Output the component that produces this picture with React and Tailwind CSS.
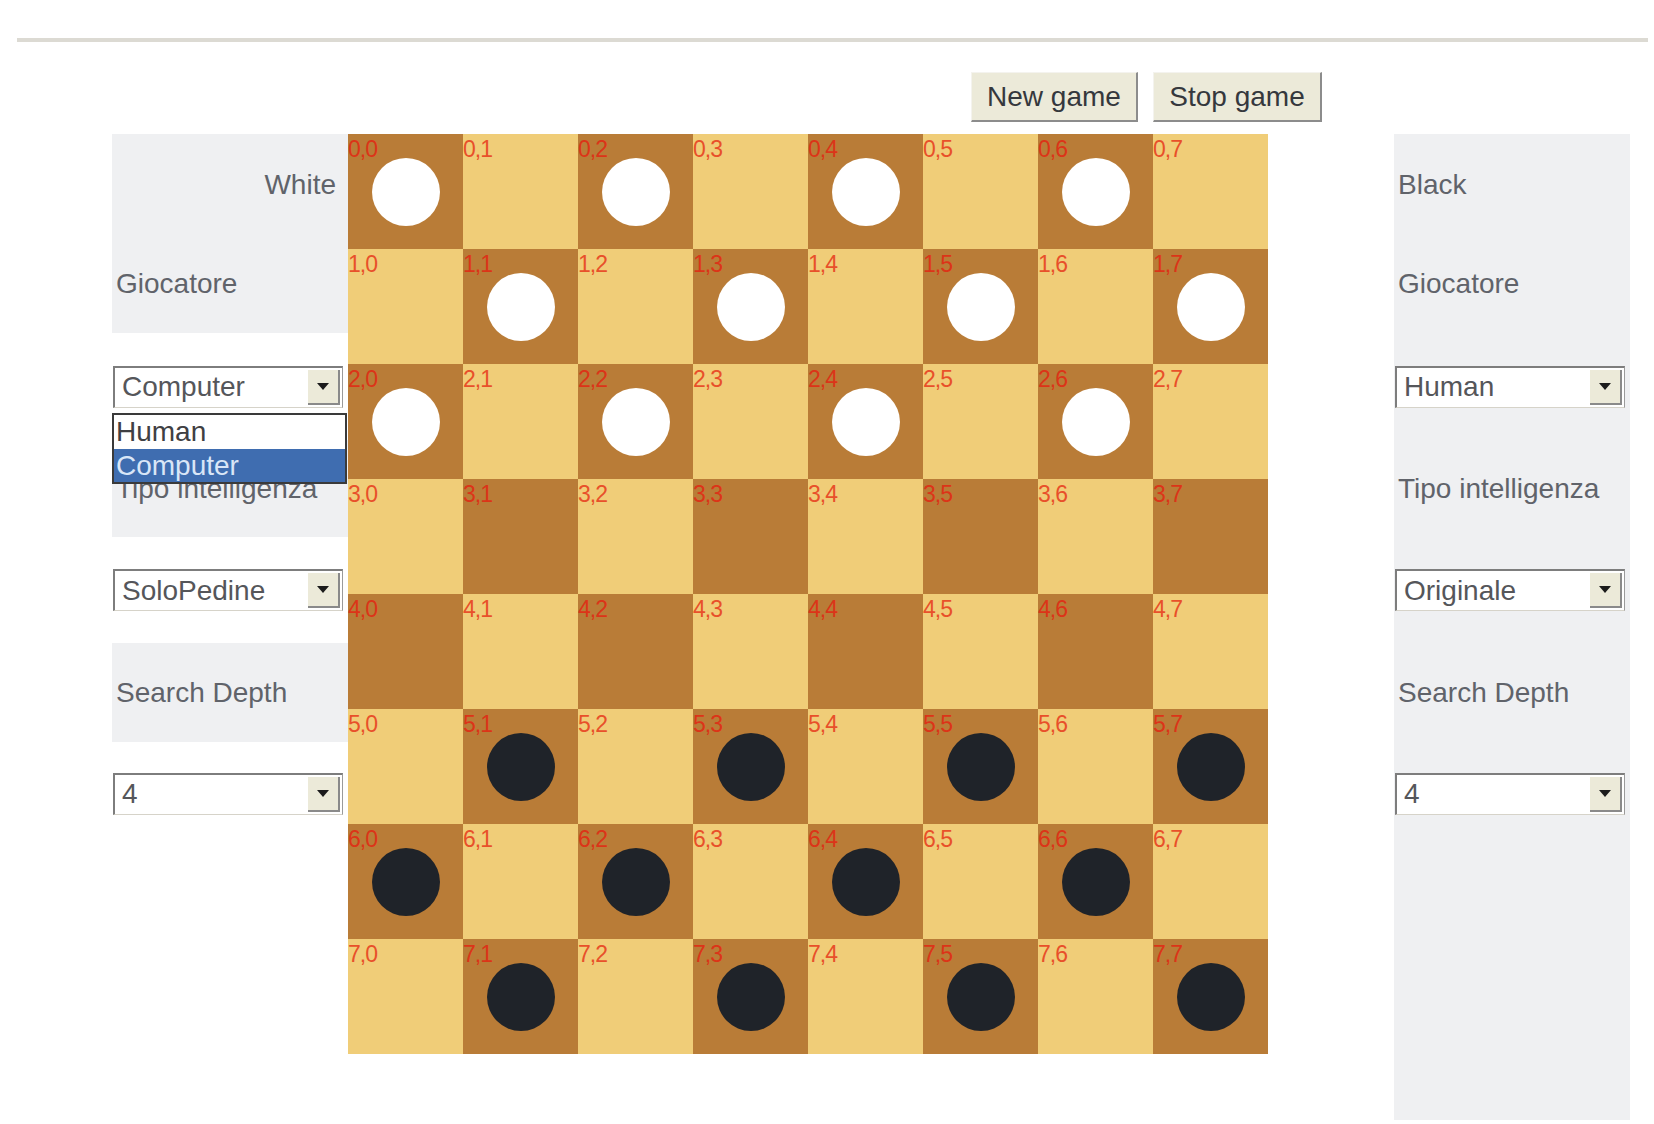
import React from "react";

const FONT = { fontFamily: '"Liberation Sans", Arial, sans-serif' };

const Select = ({ value }) => {
  return (
    <div className="flex h-[42px] w-[230px] items-stretch border-t-2 border-l-2 border-r border-b border-t-[#7d7d7d] border-l-[#7d7d7d] border-r-[#9a9a9a] border-b-[#d6d3c9] bg-white">
      <div className="flex flex-1 items-center pl-[7px] text-[28px] leading-none text-[#55565a]">
        {value}
      </div>
      <div className="my-[2px] mr-[2px] flex w-[32px] items-center justify-center border-r-2 border-b-2 border-r-[#8a8a8a] border-b-[#8a8a8a] bg-[#ecead9]">
        <svg width="12" height="7" viewBox="0 0 12 7">
          <polygon points="0,0 12,0 6,7" fill="#1c1c1c" />
        </svg>
      </div>
    </div>
  );
};

const Label = ({ children, right }) => (
  <div
    className={`flex h-full items-center text-[28px] leading-none text-[#60636a] ${
      right ? "justify-end pr-[12px]" : "pl-[4px]"
    }`}
  >
    {children}
  </div>
);

const PlayerPanel = ({ color, player, ai, depth, left }) => {
  // label rows are grey, select rows are white on the left and grey on the right
  const grey = "bg-[#eff0f2]";
  const selRow = left ? "" : grey;
  return (
    <div className={`w-[236px] ${left ? "" : `${grey} h-[986px]`} relative`}>
      <div className={`h-[101px] ${grey}`}>
        <Label right={left}>{color}</Label>
      </div>
      <div className={`h-[98px] ${grey}`}>
        <Label>Giocatore</Label>
      </div>
      <div className={`flex h-[107px] items-center pl-[1px] ${selRow}`}>
        <Select value={player} />
      </div>
      <div className={`h-[97px] ${grey}`}>
        <Label>Tipo intelligenza</Label>
      </div>
      <div className={`flex h-[106px] items-center pl-[1px] ${selRow}`}>
        <Select value={ai} />
      </div>
      <div className={`h-[99px] ${grey}`}>
        <Label>Search Depth</Label>
      </div>
      <div className={`flex h-[103px] items-center pl-[1px] ${selRow}`}>
        <Select value={depth} />
      </div>

      {left && (
        /* open dropdown list of the player select */
        <div className="absolute left-0 top-[279px] w-[235px] border-2 border-[#3a3a3a] bg-white text-[28px] leading-none">
          <div className="flex h-[34px] items-center pl-[2px] text-[#3f4043]">
            Human
          </div>
          <div className="flex h-[33px] items-center bg-[#3f6db0] pl-[2px] text-[#d9e6f7]">
            Computer
          </div>
        </div>
      )}
    </div>
  );
};

const Board = () => {
  const cells = [];
  for (let r = 0; r < 8; r++) {
    for (let c = 0; c < 8; c++) {
      const dark = (r + c) % 2 === 0;
      let piece = null;
      if (dark && r < 3) piece = "bg-white";
      if (dark && r > 4) piece = "bg-[#1f2329]";
      cells.push(
        <div
          key={`${r}-${c}`}
          className={`relative flex h-[115px] items-center justify-center ${
            dark ? "bg-[#b97c37]" : "bg-[#f0cd78]"
          }`}
        >
          <span
            className={`absolute left-0 top-[4px] text-[23px] leading-none tracking-[-1px] ${
              dark ? "text-[#dc3418]" : "text-[#e8502a]"
            }`}
          >
            {r},{c}
          </span>
          {piece && <div className={`h-[68px] w-[68px] rounded-full ${piece}`} />}
        </div>
      );
    }
  }
  return <div className="grid w-[920px] grid-cols-8">{cells}</div>;
};

const App = () => {
  return (
    <div className="h-[1124px] w-[1654px] overflow-hidden bg-white" style={FONT}>
      <div className="pt-[38px]">
        <div className="ml-[17px] mr-[6px] h-[4px] bg-[#dcdad3]" />
      </div>

      <div className="mt-[30px] flex gap-[15px] pl-[971px]">
        <button className="h-[50px] w-[167px] border-t border-l border-r-2 border-b-2 border-t-[#f4f3ee] border-l-[#f4f3ee] border-r-[#8c8c8c] border-b-[#8c8c8c] bg-[#ecead9] text-[28px] leading-none text-[#35383d]">
          New game
        </button>
        <button className="h-[50px] w-[169px] border-t border-l border-r-2 border-b-2 border-t-[#f4f3ee] border-l-[#f4f3ee] border-r-[#8c8c8c] border-b-[#8c8c8c] bg-[#ecead9] text-[28px] leading-none text-[#35383d]">
          Stop game
        </button>
      </div>

      <div className="mt-[12px] flex items-start pl-[112px]">
        <PlayerPanel color="White" player="Computer" ai="SoloPedine" depth="4" left />
        <Board />
        <div className="ml-[126px]">
          <PlayerPanel color="Black" player="Human" ai="Originale" depth="4" />
        </div>
      </div>
    </div>
  );
};

export default App;
